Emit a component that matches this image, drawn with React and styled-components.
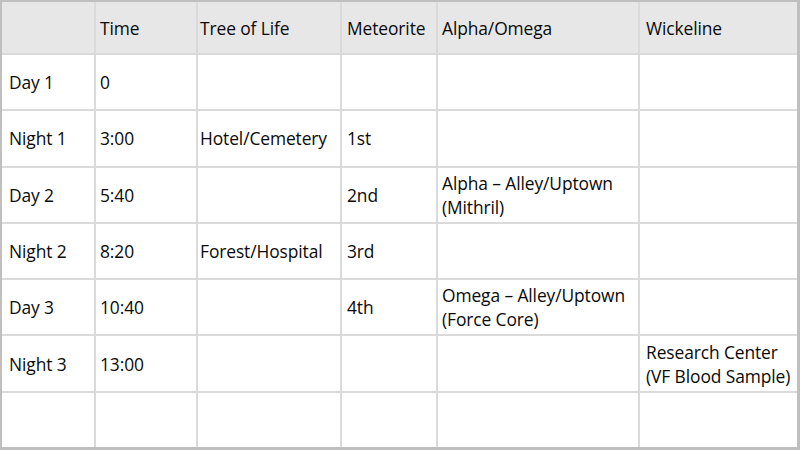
import React from "react";
import styled, { createGlobalStyle, css } from "styled-components";

const GlobalStyle = createGlobalStyle`
  html, body {
    margin: 0;
    padding: 0;
    background: #ffffff;
  }
  body {
    font-family: "Open Sans", "Noto Sans", sans-serif;
  }
`;

const columns = ["", "Time", "Tree of Life", "Meteorite", "Alpha/Omega", "Wickeline"];

const rows = [
  ["Day 1", "0", "", "", "", ""],
  ["Night 1", "3:00", "Hotel/Cemetery", "1st", "", ""],
  ["Day 2", "5:40", "", "2nd", ["Alpha – Alley/Uptown", "(Mithril)"], ""],
  ["Night 2", "8:20", "Forest/Hospital", "3rd", "", ""],
  ["Day 3", "10:40", "", "4th", ["Omega – Alley/Uptown", "(Force Core)"], ""],
  ["Night 3", "13:00", "", "", "", ["Research Center", "(VF Blood Sample)"]],
  ["", "", "", "", "", ""],
];

// left padding per column, read off the screenshot
const pads = [7, 4, 2, 5, 4, 6];

const App = () => {
  return (
    <>
      <GlobalStyle />
      <Frame>
        <Grid>
          {columns.map((title, id) => (
            <Cell key={`h${id}`} header pad={pads[id]}>
              {title}
            </Cell>
          ))}
          {rows.map((row, r) =>
            row.map((value, c) => (
              <Cell key={`${r}-${c}`} pad={pads[c]}>
                {Array.isArray(value)
                  ? value.map((line, i) => <Line key={i}>{line}</Line>)
                  : value}
              </Cell>
            ))
          )}
        </Grid>
      </Frame>
    </>
  );
};

export default App;

const Frame = styled.div`
  width: 800px;
  height: 450px;
  box-sizing: border-box;
  border: solid #bfbfbf;
  border-width: 2px 3px 3px 2px;
  background: #dadada;
`;

const Grid = styled.div`
  height: 100%;
  display: grid;
  grid-template-columns: 92px 100px 142px 94px 200px 1fr;
  grid-template-rows: 51px repeat(7, 1fr);
  gap: 2px;
`;

const Cell = styled.div`
  display: flex;
  flex-direction: column;
  justify-content: center;
  padding: 0 2px 0 ${(props) => props.pad}px;
  background: #ffffff;
  color: #0a0a0a;
  font-size: 17.4px;
  line-height: 24px;
  letter-spacing: -0.1px;
  white-space: nowrap;
  overflow: hidden;

  ${(props) =>
    props.header &&
    css`
      background: #e7e7e7;
    `}
`;

const Line = styled.span`
  display: block;
`;
